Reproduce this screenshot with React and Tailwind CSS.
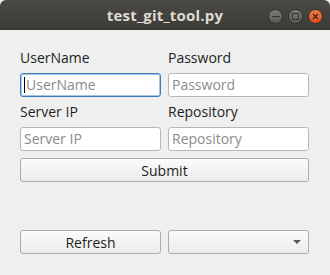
import React from "react";

const font = { fontFamily: '"Open Sans", "Noto Sans", "DejaVu Sans", sans-serif' };

function Field({ placeholder, focused }) {
  return (
    <div
      className={
        "h-[24px] rounded-[3px] bg-white border flex items-center pl-[3px] text-[14px] text-[#8b8b8b] " +
        (focused ? "border-[#3d7ab8] shadow-[inset_0_0_0_1px_#a8c6e6]" : "border-[#b7b7b7]")
      }
    >
      {focused && <span className="w-px h-[16px] bg-black mr-px" />}
      <span className="leading-none">{placeholder}</span>
    </div>
  );
}

function Label({ children }) {
  return <div className="h-[18px] flex items-center text-[14px] text-[#1e1e1e] leading-none">{children}</div>;
}

function Button({ children, className = "" }) {
  return (
    <div
      className={
        "h-[24px] rounded-[3px] border border-[#acacac] bg-gradient-to-b from-[#fbfbfb] to-[#ececec] flex items-center justify-center text-[14px] text-[#1e1e1e] " +
        className
      }
    >
      {children}
    </div>
  );
}

export default function App() {
  return (
    <div className="w-[330px] h-[275px] bg-[#efefef] overflow-hidden" style={font}>
      {/* title bar */}
      <div className="relative h-[30px] rounded-t-[6px] bg-gradient-to-b from-[#4a4944] to-[#3c3b37] flex items-center justify-center">
        <span className="text-[15px] font-bold text-[#dfdbd2] tracking-[0.2px]">test_git_tool.py</span>
        <div className="absolute right-[7px] top-[9px] flex gap-[5px]">
          <div className="w-[15px] h-[15px] rounded-full bg-gradient-to-b from-[#7d7c78] to-[#5a5955] border border-[#2f2e2b] flex items-center justify-center">
            <div className="w-[8px] h-[1.5px] bg-[#34332f]" />
          </div>
          <div className="w-[15px] h-[15px] rounded-full bg-gradient-to-b from-[#7d7c78] to-[#5a5955] border border-[#2f2e2b] flex items-center justify-center">
            <div className="w-[7px] h-[7px] border border-[#34332f]" />
          </div>
          <div className="w-[15px] h-[15px] rounded-full bg-gradient-to-b from-[#f47a48] to-[#df4a1b] border border-[#2f2e2b] flex items-center justify-center">
            <svg width="7" height="7" viewBox="0 0 7 7">
              <path d="M1 1L6 6M6 1L1 6" stroke="#3c2a20" strokeWidth="1.3" />
            </svg>
          </div>
        </div>
      </div>

      <div className="pl-[20px] pr-[21px] pt-[19px]">
        <div className="grid grid-cols-2 gap-x-[7px]">
          <div className="flex flex-col gap-[6px]">
            <Label>UserName</Label>
            <Field placeholder="UserName" focused />
          </div>
          <div className="flex flex-col gap-[6px]">
            <Label>Password</Label>
            <Field placeholder="Password" />
          </div>
          <div className="flex flex-col gap-[6px] mt-[6px]">
            <Label>Server IP</Label>
            <Field placeholder="Server IP" />
          </div>
          <div className="flex flex-col gap-[6px] mt-[6px]">
            <Label>Repository</Label>
            <Field placeholder="Repository" />
          </div>
        </div>
        <Button className="mt-[7px]">Submit</Button>
        <div className="grid grid-cols-2 gap-x-[7px] mt-[48px]">
          <Button>Refresh</Button>
          <div className="h-[24px] rounded-[3px] border border-[#acacac] bg-gradient-to-b from-[#fbfbfb] to-[#ececec] flex items-center justify-end pr-[7px]">
            <svg width="8" height="4" viewBox="0 0 8 4">
              <path d="M0 0H8L4 4Z" fill="#5a5a5a" />
            </svg>
          </div>
        </div>
      </div>
    </div>
  );
}
